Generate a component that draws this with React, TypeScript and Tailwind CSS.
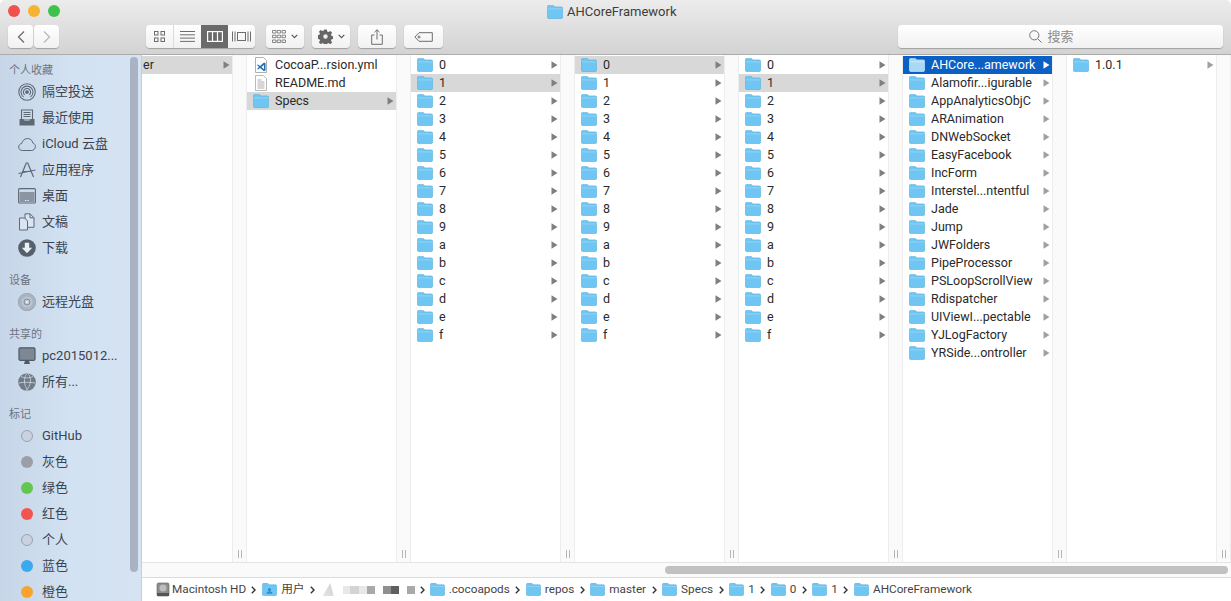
import React from 'react';

const digits = ['0', '1', '2', '3', '4', '5', '6', '7', '8', '9', 'a', 'b', 'c', 'd', 'e', 'f'];
const pods = [
  'AHCore...amework',
  'Alamofir...igurable',
  'AppAnalyticsObjC',
  'ARAnimation',
  'DNWebSocket',
  'EasyFacebook',
  'IncForm',
  'Interstel...ntentful',
  'Jade',
  'Jump',
  'JWFolders',
  'PipeProcessor',
  'PSLoopScrollView',
  'Rdispatcher',
  'UIViewI...pectable',
  'YJLogFactory',
  'YRSide...ontroller',
];

const Folder = ({ selected, small }: { selected?: boolean; small?: boolean }) => (
  <svg width={small ? 15 : 16} height={small ? 13 : 14} viewBox="0 0 16 14" className="shrink-0">
    <path
      d="M.4 1.700C.4 .9 .9 .4 1.700 .4h4.100c.6 0 .9.2 1.200.6l.7.9h6.600c.8 0 1.300.5 1.300 1.300v9c0 .8-.5 1.300-1.300 1.300H1.700C.9 13.500 .4 13 .4 12.200z"
      fill={selected ? '#a9d8f7' : '#70c6f2'}
      stroke={selected ? '#d5ecfb' : '#55acdc'}
      strokeWidth="0.6"
    />
    <path d="M.7 3.900h14.600" stroke={selected ? '#d5ecfb' : '#9ad8f7'} strokeWidth="0.8" />
  </svg>
);

const Arrow = ({ white, dim }: { white?: boolean; dim?: boolean }) => (
  <svg width="7" height="8" viewBox="0 0 7 8" className="shrink-0">
    <path d="M0.5 0.3L6.500 4L0.5 7.700z" fill={white ? '#ffffff' : dim ? '#a0a0a0' : '#7f7f7f'} />
  </svg>
);

const Row = ({ name, active, blue, dim }: { name: string; active?: boolean; blue?: boolean; dim?: boolean }) => (
  <div
    className={`h-[18px] flex items-center pl-[6px] pr-[2px] text-[12.5px] ${
      blue ? 'bg-[#0b60c6] text-white' : active ? 'bg-[#d8d8d8] text-[#2a2a2a]' : 'text-[#2a2a2a]'
    }`}
  >
    <Folder selected={blue} />
    <span className="ml-[6px] flex-1 truncate">{name}</span>
    <Arrow white={blue} dim={dim} />
  </div>
);

const FileRow = ({ name, icon }: { name: string; icon: React.ReactNode }) => (
  <div className="h-[18px] flex items-center pl-[6px] text-[12.5px] text-[#2a2a2a]">
    {icon}
    <span className="ml-[6px]">{name}</span>
  </div>
);

const Handle = () => (
  <div className="w-[15px] shrink-0 flex flex-col justify-end items-center pb-[3px] bg-[#fafafa] border-x border-[#ededed]">
    <div className="flex gap-[2px] h-[8px] mb-[1px]">
      <div className="w-px bg-[#b5b5b5]" />
      <div className="w-px bg-[#b5b5b5]" />
    </div>
  </div>
);

const DigitColumn = ({ active }: { active: string }) => (
  <>
    <div className="w-[149px] shrink-0 pt-px bg-white">
      {digits.map((d) => (
        <Row key={d} name={d} active={d === active} />
      ))}
    </div>
    <Handle />
  </>
);

const VsCodeFile = () => (
  <svg width="16" height="16" viewBox="0 0 16 16" className="shrink-0">
    <path d="M2.500 .5h8l3 3v12h-11z" fill="#fff" stroke="#9a9a9a" strokeWidth="0.8" />
    <path d="M11 5.500L7 9 5 7.500 4 8l2 2-2 2 1 .5L7 11l4 3.200 1.500-.7V6.200zM11 8v4.200L8.400 10z" fill="#1f6fb8" />
  </svg>
);

const TextFile = () => (
  <svg width="16" height="16" viewBox="0 0 16 16" className="shrink-0">
    <path d="M2.500 .5h8l3 3v12h-11z" fill="#fff" stroke="#a8a8a8" strokeWidth="0.8" />
    <path d="M4.500 5h4M4.500 7h7M4.500 9h7M4.500 11h7M4.500 13h7" stroke="#8a8a8a" strokeWidth="0.7" />
  </svg>
);

const stroke = '#5d6875';

const sideIcons: Record<string, React.ReactNode> = {
  airdrop: (
    <g fill="none" stroke={stroke} strokeWidth="1.100">
      <circle cx="9" cy="9" r="8.200" />
      <path d="M5.500 14a6 6 0 1 1 7 0M6.700 11.800a3.600 3.600 0 1 1 4.600 0" />
      <circle cx="9" cy="9" r="1.300" fill={stroke} />
    </g>
  ),
  recents: (
    <g>
      <path d="M3.500 1h11v10h-11z" fill="none" stroke={stroke} strokeWidth="1.100" />
      <path d="M5.500 3.500h7M5.500 5.500h7M5.500 7.500h7" stroke={stroke} strokeWidth="1" />
      <path d="M1.500 10h4l1 2h5l1-2h4v6.500h-15z" fill={stroke} />
    </g>
  ),
  cloud: (
    <path
      d="M4.500 15.500C2.300 15.500.7 14 .7 12c0-1.800 1.300-3.200 3-3.500C4.200 5.800 6.500 3.500 9.500 3.500c2.800 0 5 1.900 5.300 4.500 1.600.4 2.600 1.900 2.600 3.500 0 2.300-1.700 4-4 4z"
      fill="none"
      stroke={stroke}
      strokeWidth="1"
    />
  ),
  apps: (
    <g fill="none" stroke={stroke} strokeWidth="1.200">
      <path d="M9.500 1.500L15.500 16M8.500 1.500L2.500 16M.5 12.500L17.500 9M5 10.500h8" />
    </g>
  ),
  desktop: (
    <g>
      <rect x=".6" y="1.600" width="16.800" height="14.400" rx="1" fill="none" stroke={stroke} strokeWidth="1.100" />
      <rect x="1.500" y="5" width="15" height="10" fill="#8b95a2" />
      <path d="M7 13.500h4" stroke="#e6edf5" strokeWidth="1" strokeDasharray="1 .6" />
    </g>
  ),
  docs: (
    <g fill="#d9e5f2" stroke={stroke} strokeWidth="1">
      <path d="M7 .8h5l4 4v9.500H7z" />
      <path d="M12 .8v4h4" fill="none" />
      <path d="M1.500 5h5l3 3v9H1.500z" />
    </g>
  ),
  download: (
    <g>
      <circle cx="9" cy="9" r="8.800" fill="#55606c" />
      <path d="M6.800 3.800h4.400v5h3L9 14.200 3.800 8.800h3z" fill="#e9eff6" />
    </g>
  ),
  disc: (
    <g>
      <circle cx="9" cy="9" r="8.700" fill="#aab4c0" stroke="#8a95a2" strokeWidth=".6" />
      <circle cx="9" cy="9" r="5.500" fill="#bcc5d0" />
      <circle cx="9" cy="9" r="3" fill="none" stroke="#75808d" strokeWidth=".8" />
      <circle cx="9" cy="9" r="1.200" fill="#e4ebf3" />
    </g>
  ),
  monitor: (
    <g>
      <rect x="1" y=".8" width="16" height="12.500" rx="1.200" fill="#7d8894" stroke="#4f5a66" strokeWidth="1.200" />
      <path d="M6 17h6l-1-3.200H7z" fill="#4f5a66" />
    </g>
  ),
  globe: (
    <g>
      <circle cx="9" cy="9" r="8.800" fill="#707b87" />
      <path d="M3 3.500c3 2 9 2 12 0M1 10c4-1 11-1 16 0" fill="none" stroke="#cfd8e2" strokeWidth=".8" />
      <path d="M9 .5C5 5 6 13 10 17.500M10 .5c4 4.500 3 12.500-2 17" fill="none" stroke="#cfd8e2" strokeWidth=".8" />
    </g>
  ),
};

const SideHeader = ({ label, first }: { label: string; first?: boolean }) => (
  <div className={`${first ? 'h-[24px] pt-[8px]' : 'h-[28px] pt-[12px]'} pl-[9px] flex items-center text-[11px] text-[#6c7480]`}>{label}</div>
);

const SideItem = ({ icon, label }: { icon: string; label: string }) => (
  <div className="h-[26px] flex items-center pl-[18px] text-[13px] text-[#3b434e]">
    <svg width="18" height="18" viewBox="0 0 18 18" className="shrink-0">
      {sideIcons[icon]}
    </svg>
    <span className="ml-[6px] whitespace-nowrap">{label}</span>
  </div>
);

const TagItem = ({ color, label, hollow }: { color: string; label: string; hollow?: boolean }) => (
  <div className="h-[26px] flex items-center pl-[21px] text-[13px] text-[#3b434e]">
    <span
      className={`w-[12px] h-[12px] rounded-full ${hollow ? 'border border-[#9aa3af]' : ''}`}
      style={{ backgroundColor: color }}
    />
    <span className="ml-[9px]">{label}</span>
  </div>
);

const Sidebar = () => (
  <aside className="relative w-[142px] shrink-0 overflow-hidden bg-gradient-to-r from-[#c6d5e7] via-[#d3e2f2] to-[#d5e3f2] border-r border-[#c4cfdc]">
    <SideHeader label="个人收藏" first />
    <SideItem icon="airdrop" label="隔空投送" />
    <SideItem icon="recents" label="最近使用" />
    <SideItem icon="cloud" label="iCloud 云盘" />
    <SideItem icon="apps" label="应用程序" />
    <SideItem icon="desktop" label="桌面" />
    <SideItem icon="docs" label="文稿" />
    <SideItem icon="download" label="下载" />
    <SideHeader label="设备" />
    <SideItem icon="disc" label="远程光盘" />
    <SideHeader label="共享的" />
    <SideItem icon="monitor" label="pc2015012..." />
    <SideItem icon="globe" label="所有..." />
    <SideHeader label="标记" />
    <TagItem color="#c9d2de" label="GitHub" hollow />
    <TagItem color="#9b9ea5" label="灰色" />
    <TagItem color="#62c750" label="绿色" />
    <TagItem color="#f4534e" label="红色" />
    <TagItem color="#c9d2de" label="个人" hollow />
    <TagItem color="#3aa9ee" label="蓝色" />
    <TagItem color="#f7a32e" label="橙色" />
    <div className="absolute left-[130px] top-[2px] w-[8px] h-[515px] rounded-full bg-[#a9b3c3]" />
  </aside>
);

const ToolButton = ({ children, className }: { children: React.ReactNode; className: string }) => (
  <div
    className={`h-[23px] flex items-center justify-center rounded-[4px] bg-gradient-to-b from-white to-[#f1f1f1] shadow-[0_1px_1px_rgba(0,0,0,0.25)] ${className}`}
  >
    {children}
  </div>
);

const Toolbar = () => (
  <header className="h-[55px] shrink-0 flex flex-col bg-gradient-to-b from-[#ececec] to-[#d4d3d4] border-b border-[#acacac]">
    <div className="relative h-[25px] shrink-0 flex items-start pt-[5px] pl-[8px]">
      <div className="flex gap-[8px]">
        <span className="w-[12px] h-[12px] rounded-full bg-[#f1524d]" />
        <span className="w-[12px] h-[12px] rounded-full bg-[#f6b32f]" />
        <span className="w-[12px] h-[12px] rounded-full bg-[#3fc24b]" />
      </div>
      <div className="absolute left-[547px] top-[2px] flex items-center gap-[4px] text-[13px] text-[#3d3d3d]">
        <Folder />
        <span>AHCoreFramework</span>
      </div>
    </div>
    <div className="flex items-start pl-[8px] pr-[8px]">
      <ToolButton className="w-[25px]">
        <svg width="10" height="14" viewBox="0 0 10 14">
          <path d="M8 1.500L2.500 7 8 12.500" fill="none" stroke="#6d6d6d" strokeWidth="1.300" />
        </svg>
      </ToolButton>
      <ToolButton className="w-[25px] ml-px">
        <svg width="10" height="14" viewBox="0 0 10 14">
          <path d="M2 1.500L7.500 7 2 12.500" fill="none" stroke="#b9b9b9" strokeWidth="1.300" />
        </svg>
      </ToolButton>

      <div className="ml-[87px] flex h-[23px] w-[109px] rounded-[4px] overflow-hidden bg-gradient-to-b from-white to-[#f1f1f1] shadow-[0_1px_1px_rgba(0,0,0,0.25)]">
        <div className="w-[28px] flex items-center justify-center border-r border-[#dcdcdc]">
          <svg width="11" height="11" viewBox="0 0 11 11" fill="none" stroke="#6d6d6d" strokeWidth="1">
            <rect x=".5" y=".5" width="3.500" height="3.500" />
            <rect x="7" y=".5" width="3.500" height="3.500" />
            <rect x=".5" y="7" width="3.500" height="3.500" />
            <rect x="7" y="7" width="3.500" height="3.500" />
          </svg>
        </div>
        <div className="w-[27px] flex items-center justify-center">
          <svg width="15" height="11" viewBox="0 0 15 11" stroke="#6d6d6d" strokeWidth="1">
            <path d="M0 .5h15M0 3.800h15M0 7.100h15M0 10.400h15" />
          </svg>
        </div>
        <div className="w-[27px] flex items-center justify-center bg-[#6a6a6a]">
          <svg width="16" height="11" viewBox="0 0 16 11" fill="none" stroke="#fff" strokeWidth="1.200">
            <rect x=".6" y=".6" width="14.800" height="9.800" />
            <path d="M5.500 .6v9.800M10.500 .6v9.800" />
          </svg>
        </div>
        <div className="w-[27px] flex items-center justify-center">
          <svg width="19" height="11" viewBox="0 0 19 11" fill="none" stroke="#6d6d6d" strokeWidth="1">
            <rect x="5.500" y="1.500" width="8" height="8" />
            <path d="M.5 .5v10M3 .5v10M16 .5v10M18.500 .5v10" />
          </svg>
        </div>
      </div>

      <ToolButton className="w-[38px] ml-[11px] gap-[5px]">
        <svg width="14" height="13" viewBox="0 0 14 13" fill="none" stroke="#6d6d6d" strokeWidth=".8">
          <path d="M.5 .5h3.500v2.500H.5zM5.200 .5h3.500v2.500H5.200zM10 .5h3.500v2.500H10zM.5 5.200h3.500v2.500H.5zM5.200 5.200h3.500v2.500H5.200zM10 5.200h3.500v2.500H10zM.5 10h3.500v2.500H.5zM5.200 10h3.500v2.500H5.200zM10 10h3.500v2.500H10z" />
        </svg>
        <svg width="7" height="5" viewBox="0 0 7 5" fill="none" stroke="#5a5a5a" strokeWidth="1.200">
          <path d="M.7 .8L3.500 3.700 6.300 .8" />
        </svg>
      </ToolButton>
      <ToolButton className="w-[38px] ml-[8px] gap-[5px]">
        <svg width="15" height="15" viewBox="0 0 15 15">
          <path
            d="M6.200 .5h2.600l.4 2 1.300.6 1.800-1.100 1.800 1.800-1.100 1.800.6 1.300 2 .4v2.600l-2 .4-.6 1.300 1.100 1.800-1.800 1.800-1.800-1.100-1.300.6-.4 2H6.200l-.4-2-1.300-.6-1.800 1.100-1.800-1.800 1.100-1.800-.6-1.300-2-.4V6.200l2-.4.6-1.300-1.100-1.800 1.800-1.800 1.800 1.100 1.300-.6z"
            fill="#666"
          />
          <circle cx="7.500" cy="7.500" r="2.200" fill="#eee" />
        </svg>
        <svg width="7" height="5" viewBox="0 0 7 5" fill="none" stroke="#5a5a5a" strokeWidth="1.200">
          <path d="M.7 .8L3.500 3.700 6.300 .8" />
        </svg>
      </ToolButton>
      <ToolButton className="w-[38px] ml-[8px]">
        <svg width="12" height="16" viewBox="0 0 12 16" fill="none" stroke="#6d6d6d" strokeWidth="1">
          <path d="M3.500 6H.7v9.300h10.600V6H8.500M6 10.500V.8M3.500 3.200L6 .8l2.500 2.400" />
        </svg>
      </ToolButton>
      <ToolButton className="w-[39px] ml-[8px]">
        <svg width="20" height="10" viewBox="0 0 20 10" fill="none" stroke="#6d6d6d" strokeWidth="1">
          <path d="M5 .7h13.300v8.600H5L.9 5z" />
          <circle cx="5" cy="5" r="1" />
        </svg>
      </ToolButton>

      <ToolButton className="flex-1 ml-[455px] pr-[18px] gap-[5px] text-[13px] text-[#8d8d8d]">
        <svg width="13" height="13" viewBox="0 0 13 13" fill="none" stroke="#777" strokeWidth="1">
          <circle cx="5.300" cy="5.300" r="4.600" />
          <path d="M8.700 8.700L12.500 12.500" />
        </svg>
        <span>搜索</span>
      </ToolButton>
    </div>
  </header>
);

const crumbs = ['.cocoapods', 'repos', 'master', 'Specs', '1', '0', '1', 'AHCoreFramework'];

const Chevron = ({ wide }: { wide?: boolean }) => (
  <svg
    width="5"
    height="8"
    viewBox="0 0 5 8"
    className={`shrink-0 ${wide ? 'mx-[5.5px]' : 'mx-[5px]'}`}
    fill="none"
    stroke="#333"
    strokeWidth="1.400"
  >
    <path d="M.8 .8L4 4 .8 7.200" />
  </svg>
);

const PathBar = () => (
  <div className="h-[24px] shrink-0 flex items-center pl-[14px] text-[11.75px] text-[#444] bg-white border-t border-[#dcdcdc] whitespace-nowrap">
    <svg width="14" height="15" viewBox="0 0 14 15" className="shrink-0">
      <rect x="1" y="1" width="12" height="13" rx="1.500" fill="#8d8d8d" stroke="#5e5e5e" strokeWidth=".6" />
      <circle cx="7" cy="6" r="3.500" fill="#bdbdbd" />
      <rect x="1" y="11" width="12" height="3" fill="#555" />
    </svg>
    <span className="ml-[2px]">Macintosh HD</span>
    <Chevron />
    <svg width="15" height="13" viewBox="0 0 16 14" className="shrink-0 ml-px">
      <path d="M.4 1.700C.4 .9 .9 .4 1.700 .4h4.100l2 1.500h6.600c.8 0 1.300.5 1.300 1.300v9c0 .8-.5 1.300-1.300 1.300H1.700C.9 13.500 .4 13 .4 12.200z" fill="#70c6f2" stroke="#55acdc" strokeWidth=".6" />
      <path d="M8 5.500a1.700 1.700 0 1 1-.01 0M4.800 11.500c.3-1.800 1.600-2.500 3.200-2.500s2.900.7 3.200 2.500z" fill="#2f8ecb" />
    </svg>
    <span className="ml-[4px]">用户</span>
    <Chevron />
    <div className="w-[11px] h-[13px] ml-[3px] bg-gradient-to-tr from-[#e6e6e6] to-[#cfcfcf] [clip-path:polygon(0_100%,70%_0,100%_100%)]" />
    {/* blurred-out user name */}
    <div className="flex items-center h-[8px] ml-[9px]">
      <span className="w-[7px] h-full bg-[#e8e8e8]" />
      <span className="w-[9px] h-full bg-[#d3d3d3]" />
      <span className="w-[8px] h-full bg-[#e8e8e8]" />
      <span className="w-[8px] h-full bg-[#a9a9a9]" />
      <span className="w-[8px] h-full" />
      <span className="w-[8px] h-full bg-[#8f8f8f]" />
      <span className="w-[8px] h-full bg-[#5f5f5f]" />
      <span className="w-[8px] h-full" />
      <span className="w-[8px] h-full bg-[#a9a9a9]" />
    </div>
    <Chevron />
    {crumbs.map((c, i) => (
      <React.Fragment key={i}>
        <Folder small />
        <span className="ml-[4px]">{c}</span>
        {i < crumbs.length - 1 && <Chevron wide />}
      </React.Fragment>
    ))}
  </div>
);

export default function App() {
  return (
    <div className="w-[1231px] h-[601px] overflow-hidden flex flex-col bg-white font-[family-name:Roboto,'Noto_Sans_CJK_SC',sans-serif] rounded-t-[5px]">
      <Toolbar />
      <div className="flex-1 min-h-0 flex">
        <Sidebar />
        <main className="flex-1 min-w-0 flex flex-col">
          <div className="flex-1 min-h-0 flex border-b border-[#e4e4e4]">
            <div className="w-[90px] shrink-0 pt-px">
              <div className="h-[18px] flex items-center justify-between bg-[#d8d8d8] pl-px pr-[2px] text-[12.5px] text-[#2a2a2a]">
                <span>er</span>
                <Arrow />
              </div>
            </div>
            <Handle />
            <div className="w-[149px] shrink-0 pt-px">
              <FileRow name="CocoaP...rsion.yml" icon={<VsCodeFile />} />
              <FileRow name="README.md" icon={<TextFile />} />
              <Row name="Specs" active />
            </div>
            <Handle />
            <DigitColumn active="1" />
            <DigitColumn active="0" />
            <DigitColumn active="1" />
            <div className="w-[149px] shrink-0 pt-px">
              {pods.map((p, i) => (
                <Row key={p} name={p} blue={i === 0} dim />
              ))}
            </div>
            <Handle />
            <div className="w-[149px] shrink-0 pt-px">
              <Row name="1.0.1" dim />
            </div>
            <Handle />
          </div>
          <div className="h-[14px] shrink-0 flex items-center pl-[523px] pr-[3px] bg-[#fafafa]">
            <div className="h-[8px] flex-1 rounded-full bg-[#c1c1c1]" />
          </div>
          <PathBar />
        </main>
      </div>
    </div>
  );
}
